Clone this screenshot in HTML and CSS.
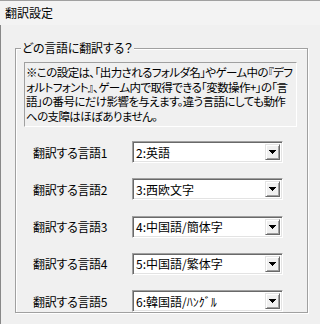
FILE: index.html
```html
<!DOCTYPE html>
<html lang="ja">
<head>
  <meta charset="UTF-8" />
  <title>翻訳設定</title>
  <link rel="stylesheet" href="styles.css">
</head>
<body>

<!-- Caption -->
<div class="caption">翻訳設定</div>

<!-- Panel -->
<div class="panel">
  <fieldset class="group">
    <legend>どの言語に翻訳する？</legend>

    <div class="note">
      ※この設定は、「出力されるフォルダ名」やゲーム中の『デフ<br>
      ォルトフォント』、ゲーム内で取得できる「変数操作+」の「言<br>
      語」の番号にだけ影響を与えます。違う言語にしても動作<br>
      への支障はほぼありません。
    </div>

    <div class="rows">
      <div class="row">
        <span class="label">翻訳する言語1</span>
        <div class="combo"><span class="value">2:英語</span><span class="drop-btn"><svg width="7" height="4" viewBox="0 0 7 4"><polygon points="0,0 7,0 3.5,4" fill="#000"/></svg></span></div>
      </div>
      <div class="row">
        <span class="label">翻訳する言語2</span>
        <div class="combo"><span class="value">3:西欧文字</span><span class="drop-btn"><svg width="7" height="4" viewBox="0 0 7 4"><polygon points="0,0 7,0 3.5,4" fill="#000"/></svg></span></div>
      </div>
      <div class="row">
        <span class="label">翻訳する言語3</span>
        <div class="combo"><span class="value">4:中国語/簡体字</span><span class="drop-btn"><svg width="7" height="4" viewBox="0 0 7 4"><polygon points="0,0 7,0 3.5,4" fill="#000"/></svg></span></div>
      </div>
      <div class="row">
        <span class="label">翻訳する言語4</span>
        <div class="combo"><span class="value">5:中国語/繁体字</span><span class="drop-btn"><svg width="7" height="4" viewBox="0 0 7 4"><polygon points="0,0 7,0 3.5,4" fill="#000"/></svg></span></div>
      </div>
      <div class="row">
        <span class="label">翻訳する言語5</span>
        <div class="combo"><span class="value">6:韓国語/ﾊﾝｸﾞﾙ</span><span class="drop-btn"><svg width="7" height="4" viewBox="0 0 7 4"><polygon points="0,0 7,0 3.5,4" fill="#000"/></svg></span></div>
      </div>
    </div>
  </fieldset>
</div>

</body>
</html>
```

FILE: styles.css
```css
body {
  margin: 0;
  width: 320px;
  height: 324px;
  overflow: hidden;
  background-color: #f0f0f0;
  color: #000;
  font-family: "Noto Sans CJK JP", sans-serif;
  font-size: 12px;
  font-feature-settings: "palt";
}

.caption {
  box-sizing: border-box;
  height: 25px;
  border-top: 1px solid #a0a0a0;
  padding-left: 5px;
  line-height: 24px;
  background-color: #f3f3f3;
}

.panel {
  box-sizing: border-box;
  height: 299px;
  border-left: 1px solid #888;
  padding-top: 16px;
}

/* etched group box */
.group {
  box-sizing: border-box;
  width: 293px;
  margin: 0 0 0 14px;
  padding: 7px 8px 0 8px;
  border: 1px solid #a0a0a0;
  box-shadow: inset 1px 1px 0 #fff, 1px 1px 0 #fff;
}

.group legend {
  margin-left: -3px;
  padding: 0 2px 0 1px;
  line-height: 14px;
  letter-spacing: -0.2px;
  background-color: #f0f0f0;
}

.note {
  box-sizing: border-box;
  width: 273px;
  padding: 2px 1px 3px 1px;
  font-size: 11.5px;
  line-height: 14.5px;
  letter-spacing: -0.6px;
  border: 1px solid;
  border-color: #a0a0a0 #fff #fff #a0a0a0;
  white-space: nowrap;
  overflow: hidden;
}

.rows {
  display: flex;
  flex-direction: column;
  gap: 15.25px;
  margin-top: 14px;
}

.row {
  display: flex;
  align-items: center;
  padding-left: 9px;
}

.label {
  width: 99px;
  letter-spacing: -0.3px;
}

.combo {
  box-sizing: border-box;
  display: flex;
  align-items: center;
  width: 151px;
  height: 22px;
  border: 1px solid;
  border-color: #a0a0a0 #fff #fff #a0a0a0;
  box-shadow: inset 1px 1px 0 #696969, inset -1px -1px 0 #e3e3e3;
  background-color: #fff;
}

.combo .value {
  flex-grow: 1;
  padding-left: 3px;
  white-space: nowrap;
}

.drop-btn {
  box-sizing: border-box;
  display: flex;
  align-items: center;
  justify-content: center;
  width: 15px;
  height: 16px;
  margin-right: 2px;
  border: 1px solid;
  border-color: #e3e3e3 #696969 #696969 #e3e3e3;
  box-shadow: inset 1px 1px 0 #fff, inset -1px -1px 0 #a0a0a0;
  background-color: #f0f0f0;
}

.drop-btn svg {
  display: block;
  shape-rendering: crispEdges;
}
```
